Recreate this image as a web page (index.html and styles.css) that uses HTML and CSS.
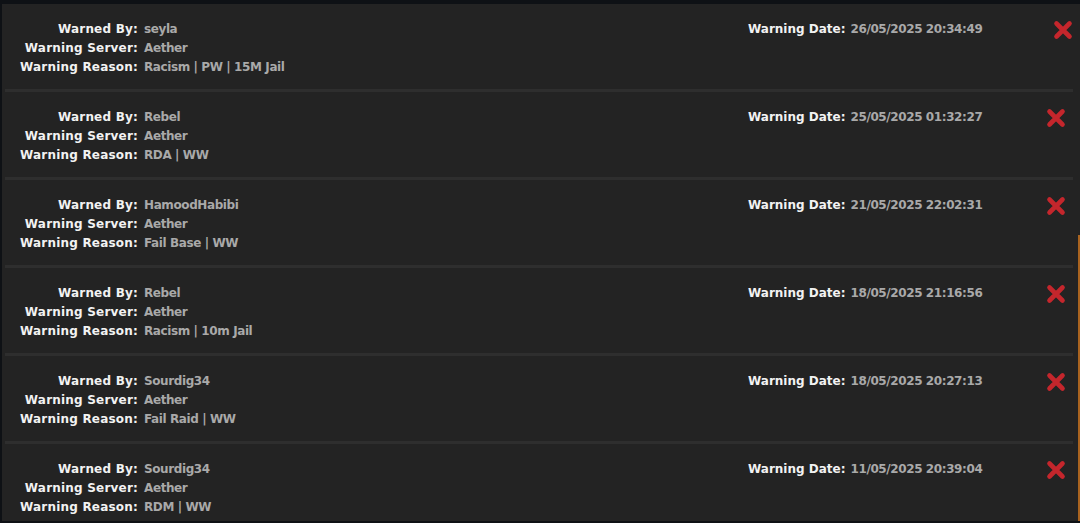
FILE: index.html
```html
<!DOCTYPE html>
<html lang="en">
<head>
  <meta charset="UTF-8">
  <meta name="viewport" content="width=device-width, initial-scale=1.0">
  <title>Warnings</title>
  <link rel="stylesheet" href="styles.css">
</head>
<body>
  <div class="panel">
    <div class="warning">
      <div class="info">
        <span class="label">Warned By:</span><span class="value">seyla</span>
        <span class="label">Warning Server:</span><span class="value">Aether</span>
        <span class="label">Warning Reason:</span><span class="value">Racism | PW | 15M Jail</span>
      </div>
      <div class="date">
        <span class="label">Warning Date:</span><span class="value">26/05/2025 20:34:49</span>
      </div>
      <button class="remove hover" title="Remove">
        <svg viewBox="0 0 20 20" width="20" height="20"><path d="M3.5 3.5 L16.5 16.5 M16.5 3.5 L3.5 16.5"/></svg>
      </button>
    </div>

    <div class="warning">
      <div class="info">
        <span class="label">Warned By:</span><span class="value">Rebel</span>
        <span class="label">Warning Server:</span><span class="value">Aether</span>
        <span class="label">Warning Reason:</span><span class="value">RDA | WW</span>
      </div>
      <div class="date">
        <span class="label">Warning Date:</span><span class="value">25/05/2025 01:32:27</span>
      </div>
      <button class="remove" title="Remove">
        <svg viewBox="0 0 20 20" width="20" height="20"><path d="M3.5 3.5 L16.5 16.5 M16.5 3.5 L3.5 16.5"/></svg>
      </button>
    </div>

    <div class="warning">
      <div class="info">
        <span class="label">Warned By:</span><span class="value">HamoodHabibi</span>
        <span class="label">Warning Server:</span><span class="value">Aether</span>
        <span class="label">Warning Reason:</span><span class="value">Fail Base | WW</span>
      </div>
      <div class="date">
        <span class="label">Warning Date:</span><span class="value">21/05/2025 22:02:31</span>
      </div>
      <button class="remove" title="Remove">
        <svg viewBox="0 0 20 20" width="20" height="20"><path d="M3.5 3.5 L16.5 16.5 M16.5 3.5 L3.5 16.5"/></svg>
      </button>
    </div>

    <div class="warning">
      <div class="info">
        <span class="label">Warned By:</span><span class="value">Rebel</span>
        <span class="label">Warning Server:</span><span class="value">Aether</span>
        <span class="label">Warning Reason:</span><span class="value">Racism | 10m Jail</span>
      </div>
      <div class="date">
        <span class="label">Warning Date:</span><span class="value">18/05/2025 21:16:56</span>
      </div>
      <button class="remove" title="Remove">
        <svg viewBox="0 0 20 20" width="20" height="20"><path d="M3.5 3.5 L16.5 16.5 M16.5 3.5 L3.5 16.5"/></svg>
      </button>
    </div>

    <div class="warning">
      <div class="info">
        <span class="label">Warned By:</span><span class="value">Sourdig34</span>
        <span class="label">Warning Server:</span><span class="value">Aether</span>
        <span class="label">Warning Reason:</span><span class="value">Fail Raid | WW</span>
      </div>
      <div class="date">
        <span class="label">Warning Date:</span><span class="value">18/05/2025 20:27:13</span>
      </div>
      <button class="remove" title="Remove">
        <svg viewBox="0 0 20 20" width="20" height="20"><path d="M3.5 3.5 L16.5 16.5 M16.5 3.5 L3.5 16.5"/></svg>
      </button>
    </div>

    <div class="warning">
      <div class="info">
        <span class="label">Warned By:</span><span class="value">Sourdig34</span>
        <span class="label">Warning Server:</span><span class="value">Aether</span>
        <span class="label">Warning Reason:</span><span class="value">RDM | WW</span>
      </div>
      <div class="date">
        <span class="label">Warning Date:</span><span class="value">11/05/2025 20:39:04</span>
      </div>
      <button class="remove" title="Remove">
        <svg viewBox="0 0 20 20" width="20" height="20"><path d="M3.5 3.5 L16.5 16.5 M16.5 3.5 L3.5 16.5"/></svg>
      </button>
    </div>

    <div class="scroll-thumb"></div>
  </div>
</body>
</html>
```

FILE: styles.css
```css
html, body {
  margin: 0;
  height: 100%;
  background-color: #0e1115;
  overflow: hidden;
}
body {
  padding: 4px 0 2px 2px;
  box-sizing: border-box;
  font-family: "DejaVu Sans", Verdana, sans-serif;
  font-weight: bold;
  font-size: 12px;
}
.panel {
  position: relative;
  height: 517px;
  background-color: #232323;
  padding: 0 7px 0 3px;
  overflow: hidden;
}
.warning {
  display: flex;
  align-items: flex-start;
  height: 85px;
  border-bottom: 3px solid #2e2e2e;
}
.info {
  display: grid;
  grid-template-columns: 133px auto;
  column-gap: 6px;
  width: 743px;
  padding-top: 16px;
  line-height: 19px;
}
.info .label {
  text-align: right;
}
.label {
  color: #f2f2f2;
  letter-spacing: 0.2px;
}
.date .label {
  letter-spacing: 0;
}
.value {
  color: #a9a9a9;
  letter-spacing: -0.4px;
}
.date {
  display: flex;
  gap: 5px;
  padding-top: 16px;
  line-height: 19px;
  width: 298px;
}
.remove {
  margin-top: 16px;
  padding: 0;
  background: none;
  border: none;
  cursor: pointer;
  width: 20px;
  height: 20px;
}
.remove.hover {
  margin-left: 7px;
}
.remove svg path {
  stroke: #c4262c;
  stroke-width: 4.6;
  stroke-linecap: round;
  fill: none;
}
.scroll-thumb {
  position: absolute;
  right: 0;
  top: 231px;
  width: 2px;
  height: 300px;
  background-color: #a9631f;
}
```
